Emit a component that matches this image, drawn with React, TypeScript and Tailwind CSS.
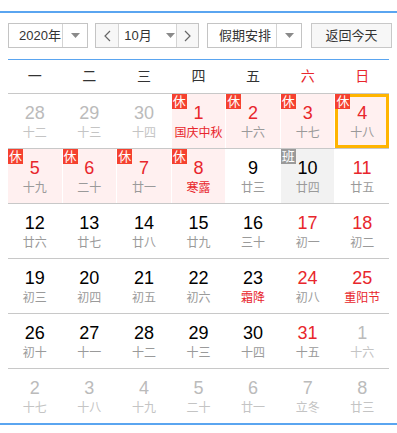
import React from "react";

type Cell = {
  d: number;
  l: string;
  out?: boolean;
  hol?: boolean;
  work?: boolean;
  red?: boolean;
  fest?: boolean;
  sel?: boolean;
};

const rows: Cell[][] = [
  [
    { d: 28, l: "十二", out: true },
    { d: 29, l: "十三", out: true },
    { d: 30, l: "十四", out: true },
    { d: 1, l: "国庆中秋", hol: true, red: true, fest: true },
    { d: 2, l: "十六", hol: true, red: true },
    { d: 3, l: "十七", hol: true, red: true },
    { d: 4, l: "十八", hol: true, red: true, sel: true },
  ],
  [
    { d: 5, l: "十九", hol: true, red: true },
    { d: 6, l: "二十", hol: true, red: true },
    { d: 7, l: "廿一", hol: true, red: true },
    { d: 8, l: "寒露", hol: true, red: true, fest: true },
    { d: 9, l: "廿三" },
    { d: 10, l: "廿四", work: true },
    { d: 11, l: "廿五", red: true },
  ],
  [
    { d: 12, l: "廿六" },
    { d: 13, l: "廿七" },
    { d: 14, l: "廿八" },
    { d: 15, l: "廿九" },
    { d: 16, l: "三十" },
    { d: 17, l: "初一", red: true },
    { d: 18, l: "初二", red: true },
  ],
  [
    { d: 19, l: "初三" },
    { d: 20, l: "初四" },
    { d: 21, l: "初五" },
    { d: 22, l: "初六" },
    { d: 23, l: "霜降", fest: true },
    { d: 24, l: "初八", red: true },
    { d: 25, l: "重阳节", red: true, fest: true },
  ],
  [
    { d: 26, l: "初十" },
    { d: 27, l: "十一" },
    { d: 28, l: "十二" },
    { d: 29, l: "十三" },
    { d: 30, l: "十四" },
    { d: 31, l: "十五", red: true },
    { d: 1, l: "十六", out: true },
  ],
  [
    { d: 2, l: "十七", out: true },
    { d: 3, l: "十八", out: true },
    { d: 4, l: "十九", out: true },
    { d: 5, l: "二十", out: true },
    { d: 6, l: "廿一", out: true },
    { d: 7, l: "立冬", out: true },
    { d: 8, l: "廿三", out: true },
  ],
];

const Caret = () => (
  <svg width="9" height="5" viewBox="0 0 9 5" className="block shrink-0">
    <path d="M0 0 L9 0 L4.5 5 Z" fill="#8a8a8a" />
  </svg>
);

const Chevron = ({ right }: { right?: boolean }) => (
  <svg width="7" height="12" viewBox="0 0 7 12" className="block">
    <path
      d={right ? "M1 1 L6 6 L1 11" : "M6 1 L1 6 L6 11"}
      fill="none"
      stroke="#666"
      strokeWidth="1.2"
    />
  </svg>
);

function DayCell({ c }: { c: Cell }) {
  let bg = "bg-white";
  if (c.hol) bg = "bg-[#fff0f0]";
  if (c.work) bg = "bg-[#f2f2f2]";
  let numColor = "text-black";
  if (c.red) numColor = "text-[#e8262c]";
  if (c.out) numColor = "text-[#bbbbbb]";
  let lunColor = "text-[#9a9a9a]";
  if (c.fest) lunColor = "text-[#e8262c]";
  if (c.out) lunColor = "text-[#c4c4c4]";
  return (
    <div className={`relative h-[54px] ${bg} flex flex-col items-center pt-[9px]`}>
      {c.sel && (
        <div className="absolute inset-0 border-[3px] border-[#ffb400]" />
      )}
      {c.hol && (
        <div className="absolute left-0 top-0 w-[15px] h-[15px] bg-[#f5412f] text-white text-[13px] leading-[15px] text-center">
          休
        </div>
      )}
      {c.work && (
        <div className="absolute left-0 top-0 w-[15px] h-[15px] bg-[#9a9a9a] text-white text-[13px] leading-[15px] text-center">
          班
        </div>
      )}
      <div className={`text-[18px] leading-[20px] ${numColor}`}>{c.d}</div>
      <div className={`mt-[2px] text-[12px] leading-[16px] whitespace-nowrap ${lunColor}`}>{c.l}</div>
    </div>
  );
}

export default function App() {
  const weekdays = ["一", "二", "三", "四", "五", "六", "日"];
  return (
    <div
      className="w-[397px] h-[433px] bg-white pt-[11px] overflow-hidden"
      style={{ fontFamily: '"Liberation Sans", "Noto Sans CJK SC", sans-serif' }}
    >
      <div className="border-y-2 border-[#5aa5f0] px-2 pt-[10px]">
        {/* controls */}
        <div className="flex items-center h-[25px] text-[13px] text-[#333] whitespace-nowrap">
          <div className="shrink-0 flex h-[25px] w-[80px] border border-[#c4c4c4]">
            <div className="flex-1 min-w-0 flex items-center pl-[10px] border-r border-[#d4d4d4]">2020年</div>
            <div className="w-[24px] shrink-0 flex items-center justify-center">
              <Caret />
            </div>
          </div>
          <div className="shrink-0 ml-[7px] flex h-[25px] w-[104px] border border-[#c4c4c4]">
            <div className="w-[23px] shrink-0 flex items-center justify-center bg-[#f7f7f7] border-r border-[#d4d4d4]">
              <Chevron />
            </div>
            <div className="flex-1 min-w-0 flex items-center justify-center gap-[14px] pl-[4px]">
              <span>10月</span>
              <Caret />
            </div>
            <div className="w-[22px] shrink-0 flex items-center justify-center bg-[#f7f7f7] border-l border-[#d4d4d4]">
              <Chevron right />
            </div>
          </div>
          <div className="shrink-0 ml-[8px] flex h-[25px] w-[95px] border border-[#c4c4c4]">
            <div className="flex-1 min-w-0 flex items-center pl-[11px] border-r border-[#d4d4d4]">假期安排</div>
            <div className="w-[24px] shrink-0 flex items-center justify-center">
              <Caret />
            </div>
          </div>
          <div className="shrink-0 ml-[9px] h-[25px] w-[81px] border border-[#c8c8c8] bg-[#f7f7f7] flex items-center justify-center">
            返回今天
          </div>
        </div>
        {/* weekday header */}
        <div className="mt-[11px] border-t border-[#5aa5f0] border-b border-b-[#c8c8c8] grid grid-cols-7 gap-x-px h-[35px] items-center text-[14px]">
          {weekdays.map((w, i) => (
            <div
              key={w}
              className={`text-center ${i >= 5 ? "text-[#e8262c]" : "text-[#333]"}`}
            >
              {w}
            </div>
          ))}
        </div>
        {/* days */}
        {rows.map((r, ri) => (
          <div
            key={ri}
            className={`grid grid-cols-7 gap-x-px ${ri < 5 ? "border-b border-[#c8c8c8]" : ""}`}
          >
            {r.map((c, ci) => (
              <DayCell key={ci} c={c} />
            ))}
          </div>
        ))}
      </div>
    </div>
  );
}
